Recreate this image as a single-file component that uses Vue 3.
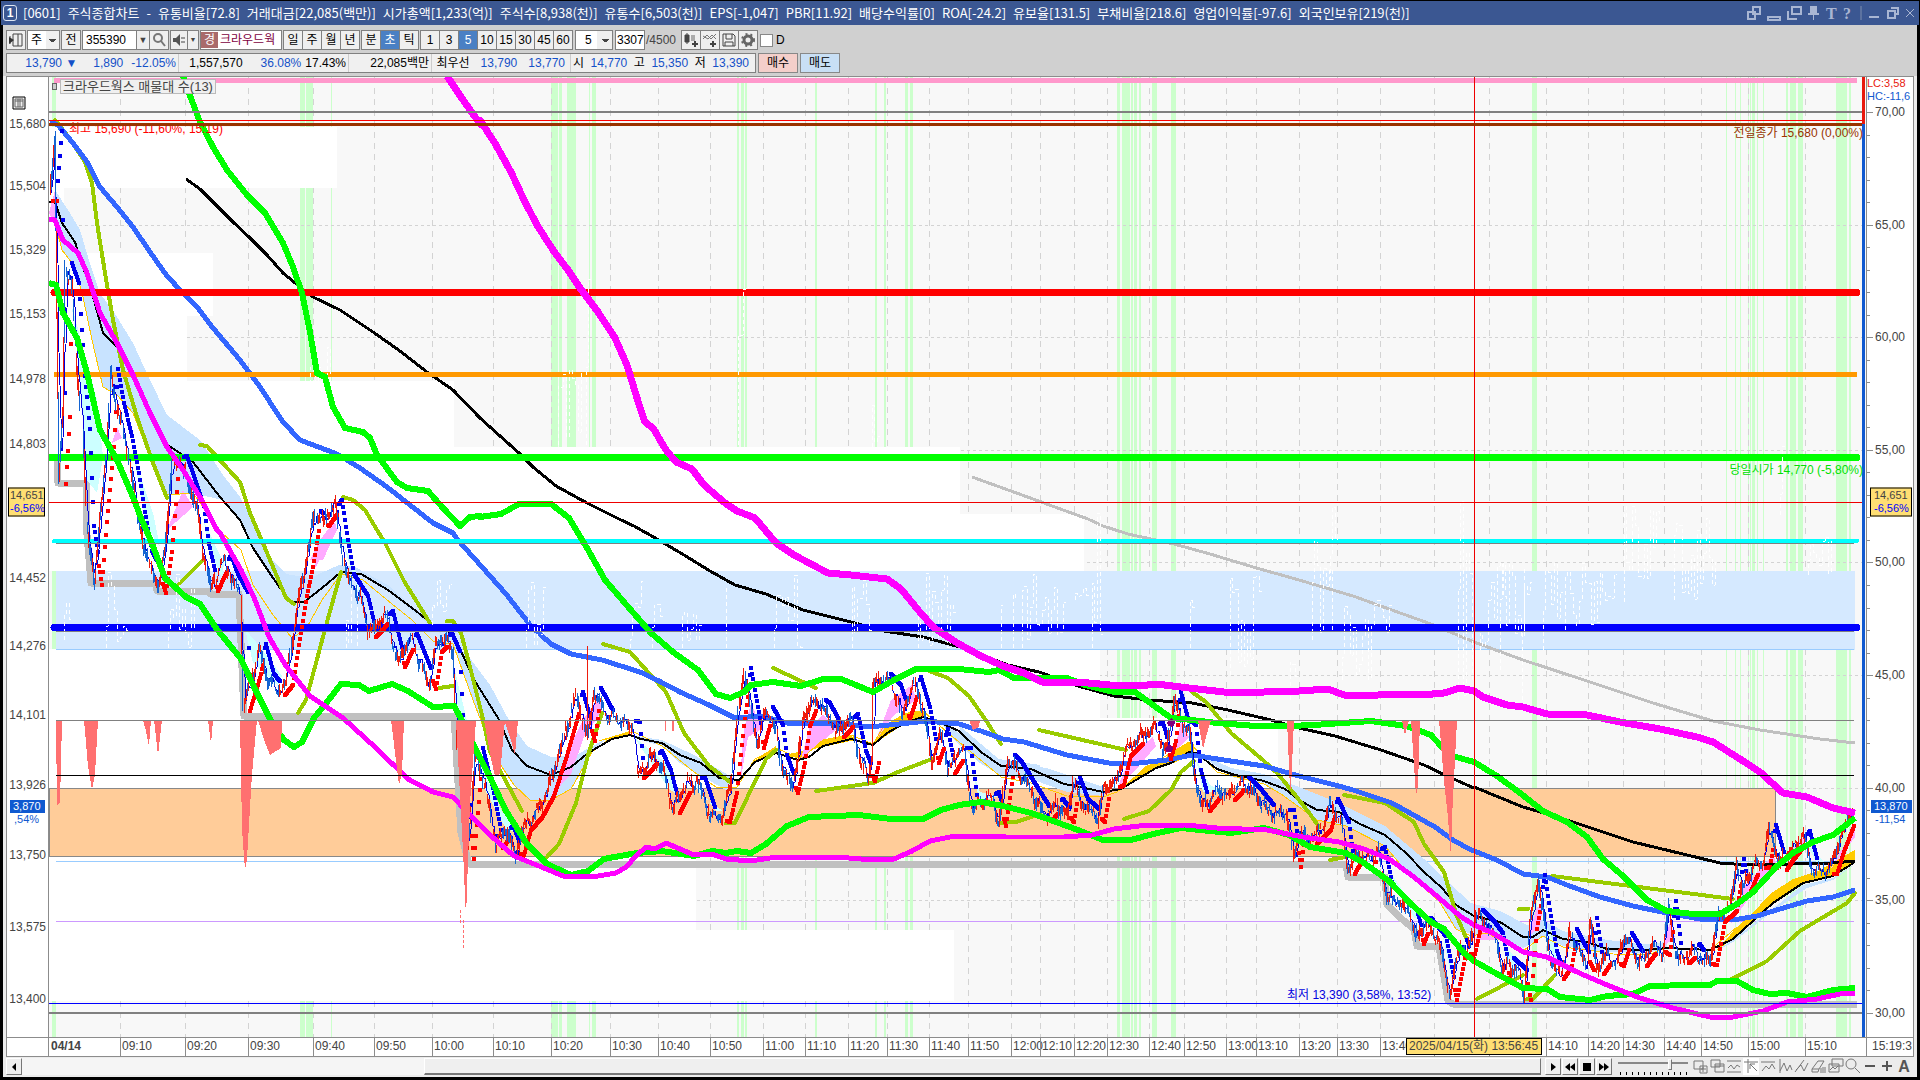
<script setup>
import { ref } from 'vue'

const stats = [
  '[0601]', '주식종합차트', '-', '유통비율[72.8]', '거래대금[22,085(백만)]', '시가총액[1,233(억)]', '주식수[8,938(천)]',
  '유통수[6,503(천)]', 'EPS[-1,047]', 'PBR[11.92]', '배당수익률[0]', 'ROA[-24.2]', '유보율[131.5]',
  '부채비율[218.6]', '영업이익률[-97.6]', '외국인보유[219(천)]',
]
const period = ref('초')
const unit = ref('5')
const code = ref('355390')
const count = ref('3307')
const zoomLevel = ref(75)
const periods = ['일', '주', '월', '년']
const intraday = ['분', '초', '틱']
const units = ['1', '3', '5', '10', '15', '30', '45', '60']

/* Plot area in chart units */
const X0 = 49, Y0 = 77, W = 1817, H = 960
const left = (x) => ({ left: ((x - X0) / W) * 100 + '%' })
const top = (y) => ({ top: ((y - Y0) / H) * 100 + '%' })
const at = (x, y) => ({ ...left(x), ...top(y) })

const prices = [
  ['15,680', 124], ['15,504', 186], ['15,329', 250], ['15,153', 314], ['14,978', 379], ['14,803', 444], ['14,452', 578],
  ['14,276', 646], ['14,101', 715], ['13,926', 785], ['13,750', 855], ['13,575', 927], ['13,400', 999],
]
const levels = [
  ['70,00', 112], ['65,00', 225], ['60,00', 337], ['55,00', 450], ['50,00', 562], ['45,00', 675], ['40,00', 788], ['35,00', 900], ['30,00', 1013],
]
const minorTicks = []
for (let i = 0; i < 40; i++) if (i % 5) minorTicks.push(112 + i * 22.525)

const times = [
  ['09:10', 120], ['09:20', 185], ['09:30', 248], ['09:40', 313], ['09:50', 374], ['10:00', 432], ['10:10', 493], ['10:20', 551], ['10:30', 610],
  ['10:40', 658], ['10:50', 710], ['11:00', 763], ['11:10', 805], ['11:20', 848], ['11:30', 887], ['11:40', 929], ['11:50', 968], ['12:00', 1011],
  ['12:10', 1040], ['12:20', 1074], ['12:30', 1107], ['12:40', 1149], ['12:50', 1184], ['13:00', 1226], ['13:10', 1256], ['13:20', 1299],
  ['13:30', 1337], ['13:40', 1380], ['', 1434], ['', 1489], ['14:10', 1546], ['14:20', 1588], ['14:30', 1623], ['14:40', 1664], ['14:50', 1701],
  ['15:00', 1748], ['15:10', 1805],
]
const signals = [
  [52, 4], [300, 5], [306, 7], [331, 1], [551, 7], [559, 3], [567, 9], [589, 1], [592, 4], [737, 2], [741, 3], [745, 2], [815, 2], [875, 2],
  [884, 2], [905, 3], [910, 3], [1117, 3], [1122, 8], [1131, 2], [1134, 3], [1139, 2], [1152, 5], [1171, 5], [1532, 5], [1726, 1], [1735, 1],
  [1740, 1], [1748, 1], [1750, 1], [1752, 3], [1757, 1], [1763, 1], [1786, 2], [1790, 6], [1798, 5], [1836, 11], [1849, 2],
]
const profile = [
  [127, 188, 337], [188, 253, 64], [253, 316, 213], [316, 381, 187], [381, 447, 454], [447, 514, 960], [514, 571, 1084], [649, 718, 1100],
  [718, 788, 1278], [856, 930, 696], [930, 1001, 954],
]

/* Curves are stored sheet by sheet: origin x, origin y, x scale, y scale */
const sheets = {
  A: [0, 80, 3, 3], B: [0, 500, 2.45, 2.703], C: [480, 500, 2.8, 2.703], D: [960, 500, 2.8, 2.703],
  E: [1400, 500, 3, 2.703], F: [480, 80, 2.45, 3], G: [0, 0, 2.45, 3],
}
function points(src, forward = true) {
  let s = sheets.A, last = -1
  const out = []
  for (const t of src.trim().split(/\s+/)) {
    if (sheets[t]) { s = sheets[t]; continue }
    const [a, b] = t.split(',').map(Number)
    const x = s[0] + a / s[2], y = s[1] + b / s[3]
    if (forward && x < last) continue
    last = x
    out.push([Math.round(x), Math.round(y)])
  }
  return out
}
const line = (src) => 'M' + points(src).map((p) => p.join(' ')).join('L')
const area = (src) => 'M' + points(src, false).map((p) => p.join(' ')).join('L') + 'Z'
const many = (src, f) => src.split('/').map(f).join('')

const longAverage = line(`A 558,297 600,327 650,378 700,425 750,475 800,525 850,578 900,622 940,650 1020,690 1120,757 1200,812 1280,876 1360,930 1440,1013
 F 50,1068 95,1120 130,1160 185,1218 262,1270 345,1320 C 345,30 430,70 495,105 570,150 645,192 715,230 800,255 905,296 1040,330 1130,355 1240,370 1345,397
 D 135,445 220,466 330,502 430,530 530,541 650,548 750,567 870,595 950,615 1050,639 1180,675 1300,717 1370,750 1440,778
 E 223,777 370,830 440,848 510,868 600,895 700,925 850,957 960,980 1040,987 1100,984 1180,984 1300,980 1365,976`)
const blueAverage = line(`A 150,125 175,135 220,190 260,245 300,320 350,380 400,440 450,515 500,587 545,635 590,680 640,745 720,840 780,920 850,1025 900,1080 1010,1122 1080,1165 1160,1220 1300,1330 1360,1360
 B 1120,105 1180,180 1240,255 1300,340 1350,390 1400,415 1475,433 1568,465 C 500,488 560,520 640,555 715,590 790,585 870,605 1000,603 1090,614 1200,602 1250,597 1340,605
 D 60,624 120,647 180,655 300,690 430,713 500,710 580,703 650,688 740,703 850,720 950,747 1050,771 1100,783 1210,820 1330,885 1380,918 1430,945
 E 223,948 290,972 370,1010 440,1018 500,1040 600,1073 700,1098 800,1117 900,1132 1000,1135 1070,1125 1140,1105 1220,1083 1300,1073 1365,1053`)
const upperMagenta = line(`G 1095,228 1130,290 1175,372 F 0,120 40,195 75,275 110,365 140,435 180,510 215,570 245,625 290,695 330,775 360,855 385,955 405,1025 425,1045 455,1110 480,1147 520,1167 550,1215 600,1270
 C 720,30 770,50 830,115 880,150 975,197 1040,203 1140,213 1180,240 1230,300 1270,345 1340,390
 D 60,423 120,450 180,467 230,492 330,492 420,500 500,502 550,497 640,507 740,519 850,519 950,515 1030,512 1075,527 1130,530 1210,524 1290,527 1355,522 1400,507 1440,517
 E 250,532 320,555 370,560 440,578 560,582 660,600 780,618 890,640 940,655 1020,700 1080,735 1150,793 1220,803 1300,832 1365,845`)
const lowerMagenta = line(`A 147,417 165,420 190,480 235,520 260,580 300,700 350,790 400,885 450,1000 500,1100 550,1170 600,1250 650,1350 B 540,90 590,190 625,270 660,370 700,450 760,530 840,590 920,670 1000,755 1060,790 1110,803 1150,850 1200,905 1260,962 1320,990 1380,1017 1450,1020 1510,1008
 C 410,993 440,960 465,937 490,943 520,928 560,943 600,960 650,957 690,970 760,977 830,965 910,968 1000,965 1100,973 1160,970 1210,950 1260,923 1330,907
 D 0,907 130,911 290,912 370,905 430,890 500,880 630,878 720,887 860,893 960,912 1060,925 1130,943 1200,970 1270,1020 1340,1075 1400,1125
 E 223,1148 280,1170 370,1222 440,1235 530,1275 620,1310 720,1347 820,1373 930,1398 1000,1398 1090,1380 1160,1357 1250,1348 1320,1335 1365,1333`)
const upperGreen = line(`G 449,228 A 568,40 600,125 640,200 680,270 740,345 795,400 850,490 880,560 905,640 930,755 950,880 975,890 1000,980 1035,1045 1090,1055 1110,1075 1130,1125 1190,1205 1220,1225 1285,1232 1330,1285 1380,1338 1410,1310 1440,1308
 C 0,45 60,37 110,12 200,12 250,50 300,130 350,215 420,295 480,360 540,410 610,460 660,525 700,535 740,520 760,500 820,492 900,503 960,485 1010,485 1100,518 1160,487 1220,457 1300,458 1340,458
 D 80,466 110,460 150,480 220,482 300,480 350,500 430,520 490,520 540,555 590,590 650,594 720,604 830,611 920,612 990,607 1150,597 1250,610 1320,635 1370,690 1440,708
 E 290,745 360,792 430,840 500,870 560,910 610,970 670,1015 740,1080 800,1110 880,1120 960,1120 1010,1092 1060,1060 1130,990 1180,955 1240,925 1300,905 1365,860`)
const lowerGreen = line(`A 147,610 168,615 190,700 230,775 260,880 300,1050 350,1140 400,1250 B 345,50 370,110 405,210 455,262 490,280 530,345 590,430 625,510 665,597 695,650 720,667 740,655 770,590 800,545 835,497 880,500 905,515 960,497 1000,515 1060,560 1112,557 1135,600 1165,675 1200,750 1240,840 1290,930 1340,985 1400,1013 1440,1003 1480,970
 C 360,967 440,953 510,950 600,963 650,950 690,955 720,950 760,955 800,930 860,880 920,857 1060,852 1150,862 1240,862 1290,837 1340,825
 D 60,815 120,828 200,845 270,870 330,892 400,918 480,920 540,903 620,887 700,895 760,900 850,887 920,905 980,937 1080,955 1130,980 1200,1030 1260,1090 1320,1140 1355,1160 1410,1225
 E 223,1247 290,1280 370,1320 440,1322 480,1343 570,1352 620,1342 700,1335 750,1315 870,1310 930,1310 950,1300 1010,1300 1060,1325 1110,1335 1160,1332 1220,1343 1300,1325 1365,1318`)
const greyAverage = line(`F 1205,1190 1300,1232 1490,1318 D 300,37 400,70 470,93 600,120 700,145 820,180 950,215 1100,260 1200,295 1320,335 E 223,383 370,432 560,490 760,548 940,598 1080,623 1260,645 1365,658`)
const steps = line(`A 172,1140 175,1210 258,1210 258,1330 B 222,225 380,225 385,245 512,245 515,255 585,255 597,585 1112,585 1130,900 1150,985
 D 1080,985 1085,1018 1190,1018 1195,1095 1240,1135 1270,1160 1280,1205 1340,1205 1365,1355 1380,1361 E 1372,1361`)
const shortAverage = many(`A 147,366 165,366 185,430 225,485 250,560 275,640 310,760 350,800 400,890 450,1000 505,1095 580,1145 660,1250 720,1320 B 590,60 620,130 670,210 710,275 745,275 790,237 835,195 885,200 950,243 1020,300 1070,345 1110,360 1160,480 1220,590 1255,675 1290,720 1350,742 1400,722 1440,683 1500,645
 C 420,635 450,645 510,657 560,690 620,712 670,752 725,757 770,707 830,683 890,702 920,695 960,665 1040,645 1100,662 1140,630 1190,602 1240,587 1290,603 1340,625
 D 60,680 115,718 200,727 290,768 350,778 400,790 450,782 550,725 590,712 640,682 660,685 720,728 770,742 850,760 910,780 950,812 1000,838 1060,843 1120,875 1190,905 1250,955 1300,1005 1350,1050 1390,1095
 E 223,1125 300,1142 370,1180 400,1180 430,1162 490,1187 560,1195 620,1213 740,1217 800,1210 930,1215 1000,1187 1060,1137 1120,1090 1210,1035 1300,1015 1365,978`, line)
const yellowEdge = line(`A 165,430 185,510 225,560 250,650 275,780 310,920 350,945 400,1000 450,1130 500,1245 580,1240 B 545,90 590,135 620,230 670,310 715,372 750,350 790,270 835,200 890,215 960,280 1010,325 1060,380 1110,390 1160,540 1210,690 1260,770 1300,813 1350,812 1400,780 1450,680 1500,640
 C 430,627 510,665 600,735 660,775 720,775 770,700 830,670 900,700 960,650 1040,635 1100,660 1130,610 1240,570 1310,630 1340,655 D 115,750 200,765 300,800 400,803 440,790 520,725 640,655 720,735 850,768 900,795 1000,865 1080,880 1190,935 1260,1015 1340,1085 1390,1160 1430,1178
 E 260,1170 300,1190 370,1218 430,1178 490,1207 560,1217 640,1228 740,1230 800,1210 930,1215 1010,1155`)
const olive = many(`A 165,120 200,165 255,245 275,310 290,430 315,580 340,720 370,870 410,1010 460,1150 500,1255/B 430,235 495,165/
 A 600,1095 620,1098 650,1130 720,1205 750,1300 B 650,130 700,265 720,280/A 1028,1252 1060,1260 1095,1290 1130,1350 B 940,110 990,220 1060,345/
 B 730,577 750,540 775,440 800,330 835,195/B 1075,508 1110,503/B 1095,327 1110,328 1130,360 1150,440 1180,580 1200,680 1280,840/B 1335,970 1370,930 1410,820 1440,690 1475,575/
 C 345,390 420,410 520,520 570,630 640,720 700,762/C 690,873 715,873 750,800 800,700 830,675/C 820,453 940,508/C 940,787 1100,765 1170,735 1265,700/
 C 1258,462 1310,480 1370,530 1420,600 1460,660/C 1455,873 1500,870 1568,850/D 220,623 465,675/D 460,863 530,840 590,785 620,735 655,705/
 D 650,518 690,545 760,630 850,705 890,740 940,800 980,850 1005,885/D 1035,973 1080,965/D 1075,797 1190,820 1270,870 1300,930 1355,1005 1390,1120 1420,1190/
 E 230,1350 370,1285/E 357,1105 385,1105/E 380,1350 400,1348 430,1320 465,1285/E 455,1015 1000,1078/E 990,1297 1100,1245 1200,1165 1340,1090 1365,1062`, line)
const blueCloud = many(`A 165,330 210,400 240,450 265,530 300,640 350,710 400,790 450,900 500,1005 600,1080 670,1185 720,1250 780,1360 B 650,140 700,200 760,212 830,175 870,180 950,230 1060,340 1150,425 1200,500 1250,600 1290,665 1350,695 1410,690 1480,650
 1450,680 1400,780 1350,812 1300,813 1260,770 1210,690 1160,540 1110,390 1060,345 950,245 890,200 835,195 750,272 715,278 670,212 620,130 590,60 545,0 A 580,1240 500,1245 450,1130 400,1000 350,945 310,920 275,780 250,650 225,560 185,510 165,430/
 C 420,635 510,650 600,690 700,745 720,757 690,785 620,745 560,710 510,665 440,645/C 1290,600 1370,645 1450,700 1568,715 1568,755 1460,745 1400,710 1320,640/D 0,612 115,705 240,725 400,775 400,800 300,790 200,755 115,745 0,635/
 D 660,680 760,725 850,740 950,775 1060,820 1190,880 1300,970 1370,1035 1430,1090 E 300,1110 380,1150 430,1135 490,1165 620,1190 740,1200 800,1195 800,1212 740,1225 620,1222 490,1205 430,1180 370,1212 300,1190 223,1175 D 1390,1160 1340,1085 1260,1015 1190,935 1080,880 1000,865 900,795 850,765 760,750/
 E 950,1218 1060,1145 1210,1040 1300,1022 1365,985 1300,1028 1220,1048 1120,1110 1000,1195`, area)
const goldCloud = many(`C 850,690 900,700 960,650 1020,635 1050,640 1050,650 960,668/C 1100,662 1130,610 1190,575 1240,567 1250,585 1190,602/C 320,655 420,625 420,635/C 760,710 830,665 830,683/
 D 450,780 520,720 570,700 600,675 640,655 655,660 655,682 600,710 550,725/E 950,1215 1010,1155 1050,1125 1110,1065 1180,1025 1260,1000 1310,972 1365,945 1365,978 1300,1015 1210,1035 1120,1090 1060,1137 1000,1187`, area)
const pinkCloud = many(`A 147,400 165,330 172,400 165,430/A 335,1090 350,1040 365,1075/A 930,1440 960,1380 1000,1330 1010,1350 970,1440/A 500,1350 550,1230 580,1280/B 770,190 780,130 820,60 825,80/B 1350,800 1400,660 1430,590 1470,530 1475,570 1430,640 1400,740/
 C 725,780 740,620 760,550 790,620 750,640/C 900,700 925,610 960,580 1000,620/C 1110,650 1150,540 1210,500 1220,540 1160,580/D 440,780 480,690 540,640 550,665 500,720/D 600,680 620,600 640,640/E 990,1150 1030,1050 1120,960 1130,985 1060,1060/
 E 1160,960 1210,910 1220,940/E 1290,1000 1365,880 1365,910/E 385,1180 410,1100 430,1100 420,1150/E 225,1190 245,1150 290,1190/E 785,1210 810,1140 825,1180`, area)
const cyanCloud = many(`A 215,680 290,960 310,1130 290,1240 260,1200 240,900/A 400,1120 460,1300 480,1400 440,1340/B 500,60 550,170 545,210 510,130/B 600,350 640,400 690,475 680,500 620,440/B 1110,440 1150,620 1150,700 1120,600/
 B 1170,700 1230,840 1270,900 1240,890 1190,790/B 840,120 885,220 880,250/C 1375,720 1400,790 1450,800 1400,815/C 430,640 520,710 560,800 530,780/C 600,760 660,840 680,840 620,800/D 660,700 700,770 740,790 680,790/D 1200,1000 1290,1130 1270,1130/D 1350,1170 1390,1280 1380,1310/D 1520,1200 1568,1250 1540,1260/E 430,1130 480,1230 470,1260 440,1200/E 1220,930 1270,975 1290,985 1250,985`, area)
const volume = many(`B 138,596 152,596 148,820 140,825/B 205,596 240,596 232,740 225,785 216,720/B 350,596 370,596 366,665 358,625/B 378,596 396,596 388,690/B 510,596 522,596 516,660/
 B 588,596 630,596 618,740 606,970 600,1000 594,890/B 632,596 692,596 688,670 662,690 648,650/B 958,596 990,596 984,740 978,770/B 1116,596 1166,596 1152,820 1142,1130 1134,950/B 1186,596 1238,596 1226,740 1212,745 1202,700/
 B 1234,596 1268,596 1262,690 1250,640/C 1370,596 1400,596 1396,614 1380,622/D 666,596 702,596 690,640 680,672/D 916,596 934,596 928,780 924,780/D 1264,596 1288,596 1282,770 1278,800/D 1340,596 1391,596 1378,860 1374,965 1366,860 1354,760/
 D 1238,596 1256,596 1246,636/C 518,596 522,596 520,655/C 538,596 544,596 541,655`, area)

const pricePath = points(`A 150,350 165,165 170,700 178,1200 190,1000 195,560 215,620 235,900 250,1060 262,1350 B 232,220 245,50 A 320,1090 332,880 350,980 375,1080 395,1190 410,1290 B 355,150 375,190 390,240 405,130 415,0 A 515,1150 540,1140 560,1200 590,1290
 B 495,130 518,235 550,160 565,210 590,260 596,560 620,470 635,400 655,480 680,515 700,490 715,380 735,250 750,170 770,40 790,60 820,10 835,120 850,210 885,270 905,360 945,310 975,440 1005,370 1050,500 1065,400 1090,370 1110,420 1120,650 1143,960 1165,680 1190,790 1215,930 1240,890 1265,960 1285,880 1310,850 1340,790 1370,690 1410,530 1440,640 1455,520 1490,590 1525,600 1550,610
 C 440,740 490,690 515,740 540,835 575,770 610,760 640,850 680,860 700,780 720,600 740,465 775,660 800,570 830,620 840,700 870,780 890,700 905,600 930,540 960,560 1000,630 1040,590 1060,690 1085,750 1097,700 1100,500 1130,480 1160,510 1185,580 1215,490 1240,570 1265,700 1290,630 1310,730 1340,680
 D 12,680 30,830 90,800 110,870 135,700 155,720 200,790 240,855 270,820 300,860 315,760 340,820 385,860 400,780 440,760 460,680 500,640 550,610 570,690 585,640 600,530 620,600 640,620 655,740 680,830 720,780 750,800 790,760 820,790 870,850 915,850 935,980 945,900 980,920 1020,880 1040,820 1070,880 1085,1000 1110,960 1140,970 1170,950 1195,1070 1230,1090 1260,1120 1280,1190 1300,1140 1340,1190 1372,1340 1400,1200 1420,1230 1445,1120 1475,1150 1500,1180
 E 310,1280 320,1250 360,1280 372,1340 390,1150 415,1025 430,1120 450,1230 470,1285 495,1250 510,1170 560,1260 570,1140 590,1270 620,1230 650,1250 675,1180 720,1250 760,1200 790,1220 807,1095 825,1230 850,1240 880,1210 900,1240 930,1245 955,1130 990,1100 1010,980 1025,1060 1060,990 1090,980 1108,890 1140,990 1160,960 1210,905 1235,1000 1290,1000 1310,940 1340,870 1358,830`)

let seed = 7
const rnd = () => ((seed = (seed * 16807) % 2147483647) / 2147483647)
function priceAt(x) {
  let i = 1
  while (i < pricePath.length - 1 && pricePath[i][0] < x) i++
  const [ax, ay] = pricePath[i - 1], [bx, by] = pricePath[i]
  const t = bx === ax ? 1 : Math.min(1, Math.max(0, (x - ax) / (bx - ax)))
  return ay + (by - ay) * t
}
let up = '', down = '', trailUp = '', trailDown = '', outline = 'M'
for (let x = 50; x < 1853; x++) {
  const a = priceAt(x), b = priceAt(x + 1)
  const drift = Math.sin(x / 2) * 3 + (rnd() - 0.5) * 7
  const lo = Math.round(Math.min(a, b) + drift - rnd() * 7), hi = Math.round(Math.max(a, b) + drift + rnd() * 7)
  if (rnd() < (a > b ? 0.7 : 0.35)) up += `M${x} ${lo}V${hi}`
  else if (rnd() < 0.8) down += `M${x} ${lo}V${hi}`
  outline += `${outline.length > 1 ? 'L' : ''}${x} ${Math.round((a + priceAt(x - 3)) / 2 + drift)}`
  const lag = Math.round(priceAt(x - 5))
  if (lag > a + 4) trailUp += `M${x} ${lag + 4}h4`
  if (lag < a - 4) trailDown += `M${x} ${lag - 4}h4`
}

const sketchZones = [
  [64, 72, 571, 640], [106, 128, 571, 648], [168, 195, 571, 648], [346, 358, 575, 648], [432, 450, 571, 625], [526, 545, 571, 648],
  [630, 642, 571, 648], [652, 662, 602, 648], [682, 700, 610, 648], [726, 728, 571, 648], [774, 802, 571, 648], [852, 871, 575, 648],
  [918, 956, 571, 648], [1001, 1003, 571, 648], [1013, 1018, 571, 648], [1022, 1066, 571, 648], [1075, 1088, 583, 600], [1092, 1102, 500, 648],
  [1190, 1194, 560, 648], [1230, 1262, 575, 675], [1290, 1298, 600, 700], [1312, 1334, 540, 640], [1330, 1336, 500, 580], [1342, 1392, 600, 680],
  [1458, 1474, 500, 700], [1480, 1525, 560, 650], [1500, 1507, 530, 670], [1522, 1532, 510, 700], [1543, 1562, 560, 650], [1565, 1598, 560, 630],
  [1600, 1616, 560, 605], [1624, 1662, 500, 602], [1674, 1716, 510, 600], [1780, 1784, 440, 515], [1808, 1832, 530, 575],
  [738, 748, 255, 445], [558, 582, 320, 445], [586, 589, 270, 445], [310, 332, 345, 440], [872, 878, 400, 447],
]
let sketches = ''
for (const [a, b, t, u] of sketchZones) {
  sketches += `M${a} ${u}`
  for (let x = a; x <= b; x += 3) sketches += `V${Math.round(t + rnd() * (u - t))}H${x + 2}`
}

const drawTools = [
  'M2 3h9v8H2zM8 8h7v7H8zM11 9v5M9 11h5', 'M2 2h9v7H2zM6 6h9v8H6zM6 8h9', 'M1 3h14M1 14h14M2 10l3-3 3 4 3-4 3 2', 'M1 4h14M5 1v14M7 6l7 7M7 6v5M7 6h5',
  'M1 4h14M2 13l4-5 3 3 3-5 3 5', 'M3 1v14M3 13l4-8 3 8 3-6 2 5', 'M1 14L10 2M2 12l5-5 3 6 4-8', 'M1 11l6-8h6l-5 8zM1 11v3h6l1-3M10 10v5M12 9v6M14 9v6',
  'M4 1h11v7H4zM1 6h10v8H1zM2 12l3-3 2 2 3-3', 'M6 6m-5 0a5 5 0 1 0 10 0a5 5 0 1 0-10 0M10 10l5 5', 'M3 8h10', 'M3 8h10M8 3v10',
]
const toolNames = ['추가', '복사', '영역', '기준선', '추세', '수직', '각도', '전체삭제', '차트저장', '확대', '축소', '늘리기']
</script>

<template>
  <main class="app">
    <header class="titlebar">
      <span class="badge">1</span>
      <h1 class="title"><span v-for="s in stats" :key="s">{{ s }}</span></h1>
      <svg class="winicons" width="172" height="20" viewBox="0 0 172 20" aria-hidden="true">
        <path d="M8 4h7v7H8zM3 9h7v7H3zM23 14h12v3H23zM47 4h9v7h-9zM43 8v8h9" fill="none" stroke="#a9b6d3" stroke-width="2" />
        <path d="M65 3h7v7h2v2h-5v5h-1v-5h-5v-2h2z" fill="#a9b6d3" />
        <path d="M116 3v14" stroke="#7f8fae" />
        <path d="M124 14h10M146 5h7v6h-3M143 8h7v7h-7z" fill="none" stroke="#a9b6d3" stroke-width="2" />
        <path d="M161 6l8 8M169 6l-8 8" stroke="#a9b6d3" />
        <text x="81" y="16">T</text><text x="98" y="16">?</text>
      </svg>
    </header>

    <div class="window">
      <div class="toolbar">
        <button class="box sq" aria-label="목록"><svg width="16" height="16"><path d="M5 2h9v12H5zM2 4v8M10 2v12" class="ic" /><path d="M1 5l5 3-5 4z" fill="#333" /></svg></button>
        <select class="box combo w32" aria-label="구분"><option>주</option></select>
        <button class="box sq">전</button>
        <span class="joined">
          <input v-model="code" class="box code" aria-label="종목코드"><button class="box arrow" aria-label="종목 목록">▼</button><button class="box sq" aria-label="종목 검색"><svg width="16" height="16"><circle cx="7" cy="6" r="4" class="ic grey" /><path d="M10 9l4 5" class="ic grey" /></svg></button>
        </span>
        <span class="joined"><button class="box snd" aria-label="소리"><svg width="14" height="14"><path d="M1 5h3l4-4v12L4 9H1z" fill="#555" /><path d="M10 4v7M12 4v7" class="ic" stroke-dasharray="2 2" /></svg></button><button class="box tiny" aria-label="소리 설정">▼</button></span>
        <span class="box stock"><b>경</b>크라우드웍</span>
        <span class="joined"><button v-for="p in periods" :key="p" class="box sq" :class="{ on: p === period }" @click="period = p">{{ p }}</button></span>
        <span class="joined"><button v-for="p in intraday" :key="p" class="box sq" :class="{ on: p === period }" @click="period = p">{{ p }}</button></span>
        <span class="joined"><button v-for="u in units" :key="u" class="box sq" :class="{ on: u === unit }" @click="unit = u">{{ u }}</button></span>
        <select class="box combo w38" aria-label="단위"><option>5</option></select>
        <input v-model="count" class="box count" aria-label="표시 개수">
        <span class="total">/4500</span>
        <span class="joined">
          <button class="box sq" aria-label="차트 추가"><svg width="16" height="16"><path d="M2 3h4v7H2zM4 1v11" fill="#444" stroke="#444" /><path d="M8 3h4v6H8z" fill="#aaa" /><path d="M9 12h6M12 9v6" stroke="#444" stroke-width="2" /></svg></button>
          <button class="box sq" aria-label="지표 추가"><svg width="16" height="16"><path d="M1 7l4-4 4 4 5-5M1 4l5 3 4-4 4 4" class="ic thin" /><path d="M8 12h6M11 9v6" stroke="#444" stroke-width="2" /></svg></button>
          <button class="box sq" aria-label="저장"><svg width="16" height="16"><path d="M2 2h10l2 2v10H2zM5 2v5h6V2M4 14v-4h8v4" class="ic" /></svg></button>
          <button class="box sq" aria-label="설정"><svg width="16" height="16"><circle cx="8" cy="8" r="4" fill="none" stroke="#666" stroke-width="3" /><circle cx="8" cy="8" r="6" fill="none" stroke="#666" stroke-width="2" stroke-dasharray="2 3" /></svg></button>
        </span>
        <label class="check"><input type="checkbox">D</label>
      </div>

      <div class="quote">
        <div class="quotebox">
          <div class="cell c1"><span class="blue">13,790 ▼</span><span class="blue">1,890</span><span class="blue">-12.05%</span></div>
          <div class="cell c2"><span>1,557,570</span><span class="blue">36.08%</span><span>17.43%</span></div>
          <div class="cell c3">22,085백만</div>
          <div class="cell c4"><span>최우선</span><span class="blue">13,790</span><span class="blue">13,770</span></div>
          <div class="cell c5"><span>시</span><span class="blue">14,770</span><span>고</span><span class="blue">15,350</span><span>저</span><span class="blue">13,390</span></div>
        </div>
        <button class="trade buy">매수</button>
        <button class="trade sell">매도</button>
      </div>

      <section class="chart">
        <div class="row grow">
          <div class="axis laxis">
            <svg class="gridicon" width="14" height="14"><path d="M1 1h12v12H1z" fill="#eee" stroke="#000" /><path d="M3 3h8v8H3zM3 5h8M6 3v8M8 3v8" fill="none" stroke="#666" /></svg>
            <span v-for="[t, y] in prices" :key="t" class="price" :style="top(y)">{{ t }}</span>
            <span class="tip ltip" :style="top(502)">14,651<i>-6,56%</i></span>
            <span class="now lnow" :style="top(813)"><b>3,870</b><i>,54%</i></span>
          </div>

          <div class="plot">
            <svg class="canvas" :viewBox="`${X0} ${Y0} ${W} ${H}`" preserveAspectRatio="none" role="img" aria-label="크라우드웍스 초봉 차트">
              <rect :x="X0" :y="Y0" :width="W" :height="H" fill="#f8f8f8" />
              <rect v-for="[x, w] in signals" :key="x" :x="x" y="77" :width="w" height="960" fill="#ccffcc" />
              <g stroke="#d3d3d3" stroke-dasharray="6 5">
                <path v-for="[t, x] in times" :key="x" :d="`M${x + 0.5} 77V1037`" />
                <path v-for="[t, y] in levels" :key="t" :d="`M49 ${y + 0.5}H1862`" stroke-dasharray="3 3" />
              </g>
              <rect v-for="[a, b, x] in profile" :key="a" :x="49" :y="a" :width="x - 49" :height="b - a" fill="#fff" />
              <path d="M56 571H1855V650H56z" fill="#d5e9ff" />
              <path d="M49 788.5H1775.5V856.5H49z" fill="#ffcc99" stroke="#888" />
              <path d="M56 649.5H1854M56 861.5H1854" stroke="#99ccff" />
              <path d="M56 921.5H1854" stroke="#cc99ff" />
              <path :d="steps" fill="none" stroke="#c0c0c0" stroke-width="7" stroke-linejoin="round" />
              <path :d="blueCloud" fill="#c8e3ff" />
              <path :d="goldCloud" fill="#ffcc00" />
              <path :d="cyanCloud" fill="#ccffff" />
              <path :d="pinkCloud" fill="#ffaaff" />
              <g fill="none" stroke-linejoin="round">
                <path :d="yellowEdge" stroke="#ffc800" />
                <path :d="longAverage" stroke="#000" stroke-width="3" />
                <path :d="greyAverage" stroke="#c0c0c0" stroke-width="3" />
                <path :d="shortAverage" stroke="#000" stroke-width="2" />
                <path :d="olive" stroke="#99cc00" stroke-width="4" stroke-linecap="round" />
                <path :d="blueAverage" stroke="#3366ff" stroke-width="5" />
                <path d="M54 80.5H1857" stroke="#ff99cc" stroke-width="5" />
                <path d="M54 292.5H1857" stroke="#f00" stroke-width="7" stroke-linecap="round" />
                <path d="M54 374.5H1857" stroke="#f90" stroke-width="5" />
                <path d="M49 457.5H1857" stroke="#0f0" stroke-width="7" stroke-linecap="round" />
                <path d="M54 541H1857" stroke="#0ff" stroke-width="4" stroke-linecap="round" />
                <path d="M54 627.5H1857" stroke="#00f" stroke-width="7" stroke-linecap="round" />
                <path :d="sketches" stroke="#fff" stroke-dasharray="4 3" />
                <path :d="outline" stroke="#0000e0" />
                <path :d="trailUp" stroke="#f00" stroke-width="4" />
                <path :d="trailDown" stroke="#00e" stroke-width="4" />
                <path :d="down" stroke="#1464d2" />
                <path :d="up" stroke="#ee1c0c" />
                <path d="M587.5 646V740" stroke="#ee1c0c" />
                <path :d="upperGreen" stroke="#0f0" stroke-width="6" />
                <path :d="lowerGreen" stroke="#0f0" stroke-width="6" />
                <path :d="upperMagenta" stroke="#f0f" stroke-width="7" />
                <path :d="lowerMagenta" stroke="#f0f" stroke-width="5" />
              </g>
              <path :d="volume" fill="#ff7070" />
              <path d="M460.5 910V925M463.5 920V948" stroke="#ff7070" stroke-dasharray="3 2" />
              <path d="M1167 722l4-4 4 4-1 4h-6zM1165 748l4-4 4 4-1 4h-6z" fill="#800080" />
              <path d="M56 543.5H1854M56 631.5H1854M56 720.5H1854" stroke="#808080" />
              <path d="M56 775.5H1854" stroke="#000" />
              <path d="M49 112H1862M49 1013H1862" stroke="#808080" stroke-width="2" />
              <path d="M49 120.5H1862" stroke="#f00" />
              <path d="M49 1003.5H1862" stroke="#00f" />
              <path d="M49 502.5H1862M1474.5 77V1037" stroke="#e00" />
              <path d="M1863.5 124V1037" stroke="#1059d0" stroke-width="3" />
              <path d="M1863.5 77V124" stroke="#e8180c" stroke-width="3" />
            </svg>
            <span class="note red" :style="at(69, 129)">최고 15,690 (-11,60%, 15:19)</span>
            <svg class="canvas" :viewBox="`${X0} ${Y0} ${W} ${H}`" preserveAspectRatio="none" aria-hidden="true"><path d="M49 124.5H1862" stroke="#993300" stroke-width="3" /></svg>
            <span class="note right brown" :style="top(133)">전일종가 15,680 (0,00%)</span>
            <span class="note right green" :style="top(470)">당일시가 14,770 (-5,80%)</span>
            <span class="note navy" :style="at(1287, 995)">최저 13,390 (3,58%, 13:52)</span>
            <span class="legend"><i></i><em>크라우드웍스 매물대 수(13)</em></span>
          </div>

          <div class="axis raxis">
            <span class="lc">LC:3,58</span><span class="hc">HC:-11,6</span>
            <i v-for="y in minorTicks" :key="y" class="tick" :style="top(y)"></i>
            <span v-for="[t, y] in levels" :key="t" class="level" :style="top(y)">{{ t }}</span>
            <span class="tip rtip" :style="top(502)">14,651<i>-6,56%</i></span>
            <span class="now rnow" :style="top(813)"><b>13,870</b><i>-11,54</i></span>
          </div>
        </div>

        <div class="row timeaxis">
          <div class="laxis"></div>
          <div class="times">
            <b class="day">04/14</b>
            <span v-for="[t, x] in times" :key="x" class="time" :style="left(x)">{{ t }}</span>
            <span class="cursor" :style="left(1406)">2025/04/15(화) 13:56:45</span>
          </div>
          <div class="raxis last">15:19:3</div>
        </div>
      </section>

      <footer class="bottom">
        <button class="raised" aria-label="왼쪽"><svg width="8" height="10"><path d="M6 1v8L2 5z" /></svg></button>
        <div class="track"><div class="gap"></div><div class="thumb"></div></div>
        <div class="play">
          <button class="raised" aria-label="재생"><svg width="12" height="10"><path d="M4 1v8l5-4z" /></svg></button>
          <button class="raised" aria-label="뒤로"><svg width="12" height="10"><path d="M6 1v8L1 5zM11 1v8L6 5z" /></svg></button>
          <button class="raised" aria-label="정지"><svg width="12" height="10"><path d="M2 1h8v8H2z" /></svg></button>
          <button class="raised" aria-label="앞으로"><svg width="12" height="10"><path d="M1 1v8l5-4zM6 1v8l5-4z" /></svg></button>
        </div>
        <input v-model="zoomLevel" class="slider" type="range" min="0" max="100" aria-label="속도">
        <div class="tools">
          <button v-for="(d, i) in drawTools" :key="i" :class="{ sel: i === 3, bold: i > 9 }" :aria-label="toolNames[i]"><svg width="16" height="16"><path :d="d" /></svg></button>
          <button class="letter">A</button>
        </div>
      </footer>
    </div>
  </main>
</template>

<style>
body { margin: 0; background: #000; }
</style>

<style scoped>
* { box-sizing: border-box; }
.app { display: flex; flex-direction: column; min-height: 100vh; padding: 1px 1px 3px; background: #000; color: #000; font: 12px/16px "Liberation Sans", "Noto Sans CJK KR", sans-serif; }
button, input, select { margin: 0; padding: 0; font: inherit; color: inherit; border-radius: 0; }
i, em { font-style: normal; }
.titlebar { display: flex; align-items: center; height: 24px; padding: 0 2px; background: #3b5792; color: #fff; }
.badge { width: 14px; height: 16px; border: 1px solid #dfe6f3; border-radius: 3px; text-align: center; font-weight: bold; line-height: 14px; }
.title { display: flex; flex: 1; gap: 7px; margin: 0; padding-left: 6px; font: 13px/24px "Noto Sans CJK KR", sans-serif; white-space: nowrap; }
.winicons text { fill: #a9b6d3; font: bold 16px "Liberation Serif", serif; }
.window { display: flex; flex: 1; flex-direction: column; margin: 0 2px; padding: 5px 3px 2px; background: linear-gradient(#d0d0d0 51px, #ececec 51px); }
.toolbar { display: flex; gap: 1px; height: 20px; }
.joined { display: flex; }
.joined .box + .box { border-left-width: 0; }
.joined .sq { width: 19px; }
.joined .sq:first-child { width: 20px; }
.box { display: flex; align-items: center; justify-content: center; height: 20px; border: 1px solid #808080; background: #efefef; }
.sq { width: 20px; }
.ic { fill: none; stroke: #444; stroke-width: 1; }
.grey { stroke: #777; stroke-width: 2; }
.thin { stroke: #777; }
.on { background: #4a80c4; color: #fff; }
.combo { appearance: none; padding-left: 3px; background: linear-gradient(#444, #444) right 3px top 8px / 7px 1px no-repeat, linear-gradient(#444, #444) right 4px top 9px / 5px 1px no-repeat, linear-gradient(#444, #444) right 5px top 10px / 3px 1px no-repeat, linear-gradient(90deg, #fff 58%, #efefef 58%); }
.w32 { width: 33px; }
.w38 { width: 38px; padding-left: 9px; margin-left: 1px; }
.code { width: 55px; padding-left: 3px; background: #fff; }
.arrow { width: 13px; font-size: 9px; color: #444; }
.snd { width: 18px; }
.tiny { width: 11px; font-size: 7px; color: #444; }
.stock { justify-content: flex-start; width: 82px; gap: 2px; background: #fff; color: #800040; white-space: nowrap; }
.stock b { width: 17px; background: #a96a6a; color: #fff; font-weight: normal; text-align: center; }
.count { width: 30px; margin-left: 1px; padding-left: 1px; background: #fff; }
.total { width: 34px; line-height: 20px; color: #444; }
.check { display: flex; align-items: center; gap: 3px; padding-left: 1px; }
.check input { appearance: none; width: 13px; height: 13px; border: 1px solid #888; background: #fff; }
.quote { display: flex; gap: 2px; height: 20px; margin: 3px 0; }
.quotebox { display: flex; width: 750px; border: 1px solid #808080; background: #f0f0f0; line-height: 18px; white-space: nowrap; }
.cell { display: flex; justify-content: flex-end; border-right: 1px solid #ccc; }
.cell:last-child { border: 0; }
.blue { color: #1450c8; }
.c1 { width: 172px; gap: 8px; padding-right: 2px; }
.c1 span:first-child { margin-right: 8px; }
.c2 { width: 170px; gap: 4px; padding-right: 2px; }
.c2 span:first-child { margin-right: 14px; }
.c3 { width: 83px; padding-right: 2px; }
.c4 { width: 139px; gap: 11px; padding-right: 5px; }
.c5 { flex: 1; justify-content: space-between; padding: 0 6px 0 2px; }
.trade { width: 40px; border: 1px solid #888; background: #f4cfca; }
.sell { background: #c8dff5; }
.chart { display: flex; flex: 1; flex-direction: column; border: 1px solid #8c8c8c; background: #fff; }
.row { display: flex; }
.grow { flex: 1; min-height: 480px; }
.axis { position: relative; color: #444; overflow: hidden; }
.laxis { width: 42px; border-right: 1px solid #8c8c8c; }
.raxis { width: 47px; border-left: 1px solid #8c8c8c; }
.gridicon { position: absolute; left: 5px; top: 19px; }
.price, .level { position: absolute; right: 2px; transform: translateY(-50%); }
.level { right: auto; left: 8px; }
.level::before { content: ""; position: absolute; left: -8px; top: 8px; width: 6px; border-top: 1px solid #8c8c8c; }
.tick { position: absolute; left: 0; width: 3px; border-top: 1px solid #8c8c8c; }
.tip, .now { position: absolute; display: flex; flex-direction: column; font-size: 11px; line-height: 13px; transform: translateY(-50%); }
.tip { height: 29px; border: 1px solid #000; background: #ffdf73; }
.tip i { color: #00f; }
.ltip { left: 1px; right: 3px; padding-left: 1px; }
.rtip { left: 3px; right: 1px; padding-left: 3px; }
.now { color: #1059d0; }
.now b { padding: 0 3px; background: #1059d0; color: #fff; font-weight: normal; }
.now i { padding-left: 4px; }
.lnow { left: 3px; right: 3px; }
.rnow { left: 4px; right: 1px; }
.lc, .hc { position: absolute; left: 0; top: 0; color: #e8180c; font-size: 11px; line-height: 13px; white-space: nowrap; }
.hc { top: 13px; color: #1059d0; }
.plot { position: relative; flex: 1; overflow: hidden; }
.canvas { position: absolute; inset: 0; width: 100%; height: 100%; shape-rendering: crispEdges; }
.note { position: absolute; white-space: nowrap; transform: translateY(-50%); }
.right { right: 3px; }
.red { color: #f00; }
.brown { color: #993300; }
.green { color: #00e000; }
.navy { color: #0000e0; }
.legend { position: absolute; left: 3px; top: 2px; display: flex; align-items: center; gap: 3px; color: #444; font-size: 13px; white-space: nowrap; }
.legend i { width: 5px; height: 7px; border: 1px solid #666; background: #ccc; }
.legend em { padding: 0 2px; border: 1px solid #bbb; background: #f0f0f0; line-height: 13px; }
.timeaxis { height: 19px; border-top: 1px solid #8c8c8c; color: #444; line-height: 17px; }
.times { position: relative; flex: 1; overflow: hidden; }
.day { position: absolute; left: 2px; }
.time { position: absolute; height: 18px; padding-left: 1px; border-left: 1px solid #8c8c8c; }
.cursor { position: absolute; height: 17px; width: 136px; padding-left: 2px; border: 1px solid #000; background: #ffdf73; line-height: 15px; white-space: nowrap; }
.last { padding-left: 5px; }
.bottom { display: flex; align-items: stretch; height: 17px; margin-top: 1px; }
.raised { display: flex; align-items: center; justify-content: center; width: 16px; border: 1px solid; border-color: #fff #777 #777 #fff; background: #efefef; }
.track { display: flex; flex: 1; }
.gap { width: 402px; background: #f5f5f5; }
.thumb { flex: 1; border: 1px solid; border-color: #fff #777 #777 #fff; border-bottom-width: 2px; background: #efefef; }
.play { display: flex; gap: 1px; padding-left: 4px; }
.slider { appearance: none; width: 70px; height: 17px; margin: 0 4px 0 6px; background: linear-gradient(#888, #888) 0 4px / 100% 2px no-repeat, repeating-linear-gradient(90deg, #000 0 1px, transparent 1px 6px) 2px 14px / 67px 3px no-repeat; }
.slider::-webkit-slider-thumb { appearance: none; width: 4px; height: 11px; margin-top: -4px; border: 1px solid; border-color: #fff #777 #777 #fff; background: #eee; }
.tools { display: flex; width: 222px; gap: 1px; }
.tools button { width: 16px; border: 0; background: none; }
.tools .sel { background: #fff; }
.tools path { fill: none; stroke: #777; }
.tools .bold path { stroke: #555; stroke-width: 2; }
.tools .letter { color: #555; font: bold 16px "Liberation Sans", sans-serif; }
</style>
